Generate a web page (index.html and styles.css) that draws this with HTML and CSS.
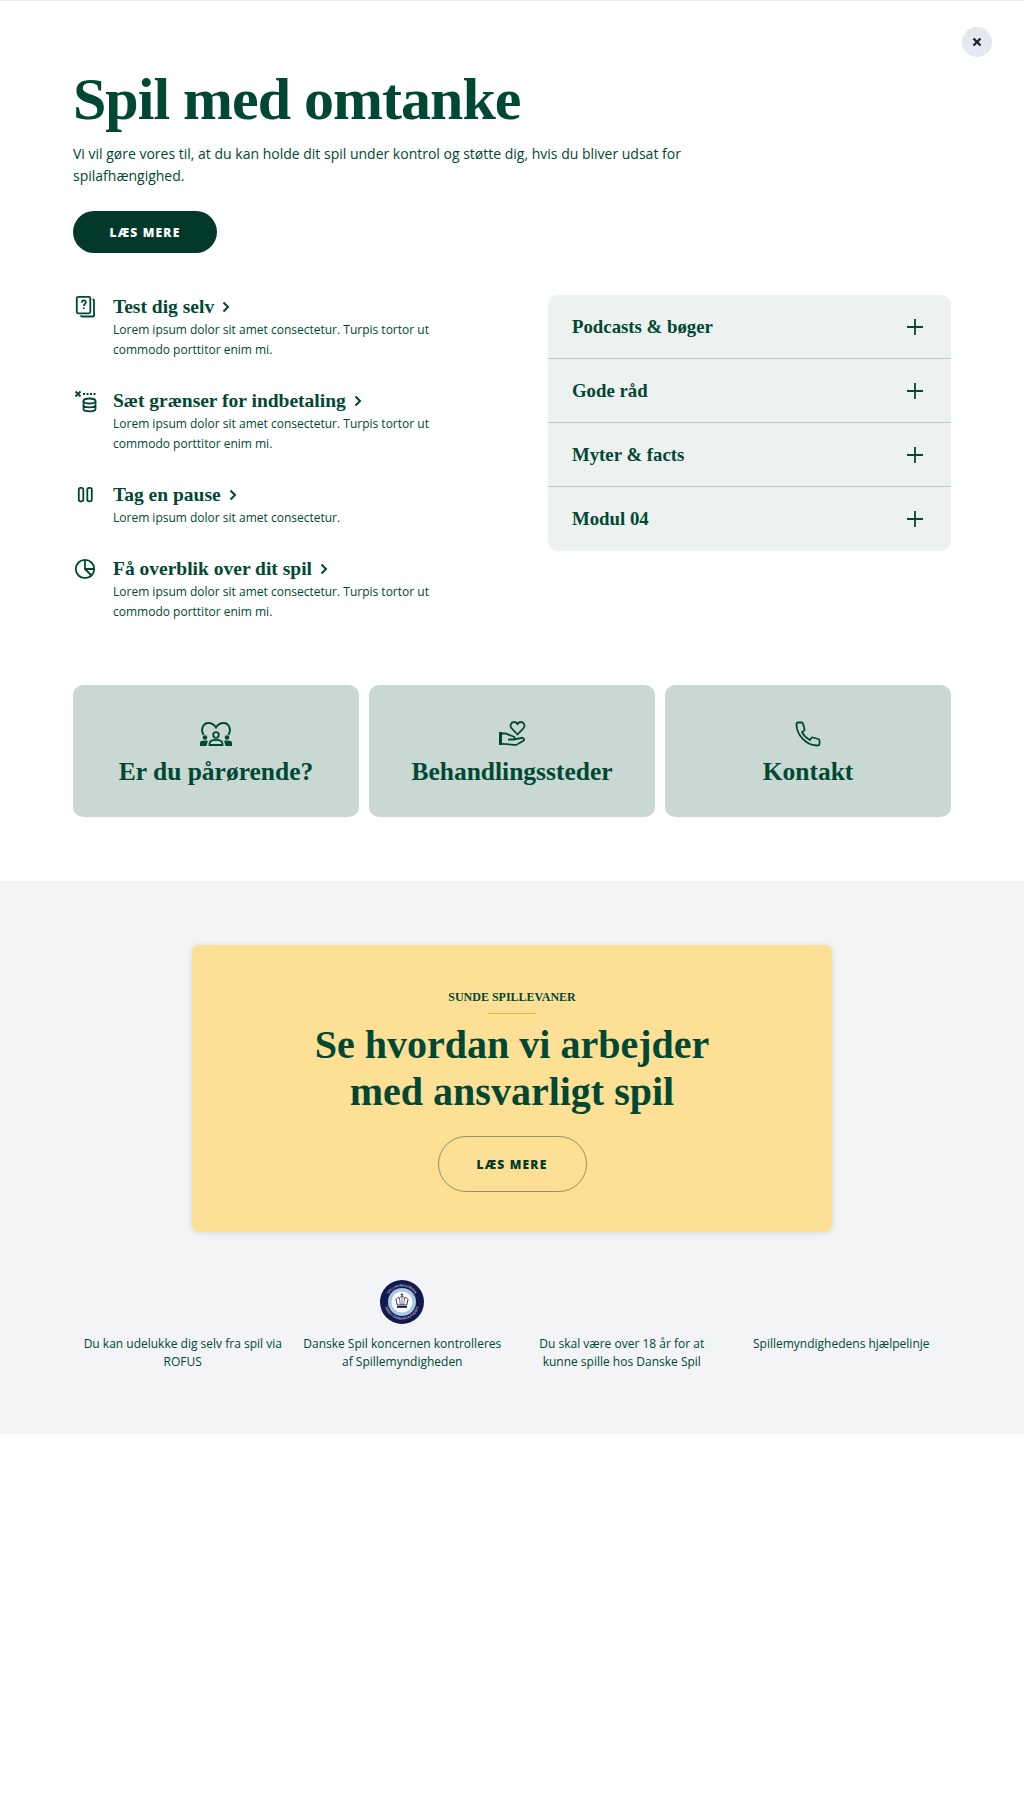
FILE: index.html
```html
<!DOCTYPE html>
<html lang="en">
  <head>
    <meta charset="UTF-8" />
    <meta name="viewport" content="width=device-width, initial-scale=1.0" />
    <title>Spil med omtanke</title>
    <link rel="stylesheet" href="styles.css">
  </head>
  <body>
    <div class="top-section">
      <div class="close-row">
        <button class="close-button" aria-label="Luk">
          <svg width="10" height="10" viewBox="0 0 10 10"><path d="M1.5 1.5l7 7M8.500 1.500l-7 7" /></svg>
        </button>
      </div>

      <h1>Spil med omtanke</h1>
      <p class="intro">Vi vil gøre vores til, at du kan holde dit spil under kontrol og støtte dig, hvis du bliver udsat for spilafhængighed.</p>
      <a class="button-dark" href="#">LÆS MERE</a>

      <div class="columns">
        <div class="link-list">
          <div class="link-item">
            <svg class="link-icon" width="24" height="24" viewBox="0 0 24 24">
              <rect x="3.800" y="1.800" width="13.500" height="16.500" rx="1.500" />
              <path d="M19.500 4.500h.5a1 1 0 0 1 1 1v15a1 1 0 0 1-1 1h-11a1 1 0 0 1-1-1v-.3" />
              <path d="M8.800 7.500c.2-3 4.200-2.700 4 0-.1 1.600-2 1.500-2 3.500M10.800 12.500v1.500" />
            </svg>
            <div>
              <h3>Test dig selv <svg class="chevron" width="8" height="12" viewBox="0 0 8 12"><path d="M1.500 1.500L6 6l-4.500 4.500" /></svg></h3>
              <p>Lorem ipsum dolor sit amet consectetur. Turpis tortor ut commodo porttitor enim mi.</p>
            </div>
          </div>
          <div class="link-item">
            <svg class="link-icon" width="24" height="24" viewBox="0 0 24 24">
              <path d="M2.500 2.500l5 5M7.500 2.500l-5 5" />
              <path d="M10 5h14" class="dashed" />
              <ellipse cx="16.500" cy="12" rx="6" ry="2.500" />
              <path d="M10.500 12v8c0 1.300 2.700 2.300 6 2.300s6-1 6-2.300v-8M10.500 16c0 1.300 2.700 2.300 6 2.300s6-1 6-2.300" />
            </svg>
            <div>
              <h3>Sæt grænser for indbetaling <svg class="chevron" width="8" height="12" viewBox="0 0 8 12"><path d="M1.500 1.500L6 6l-4.500 4.500" /></svg></h3>
              <p>Lorem ipsum dolor sit amet consectetur. Turpis tortor ut commodo porttitor enim mi.</p>
            </div>
          </div>
          <div class="link-item">
            <svg class="link-icon" width="24" height="24" viewBox="0 0 24 24">
              <rect x="5.800" y="4.800" width="4.500" height="13.500" rx="1.800" />
              <rect x="14.300" y="4.800" width="4.500" height="13.500" rx="1.800" />
            </svg>
            <div>
              <h3>Tag en pause <svg class="chevron" width="8" height="12" viewBox="0 0 8 12"><path d="M1.500 1.500L6 6l-4.500 4.500" /></svg></h3>
              <p>Lorem ipsum dolor sit amet consectetur.</p>
            </div>
          </div>
          <div class="link-item">
            <svg class="link-icon" width="24" height="24" viewBox="0 0 24 24">
              <circle cx="12" cy="12" r="9.200" />
              <path d="M12 2.800V12h9.200M12 12l6.500 6.500" />
            </svg>
            <div>
              <h3>Få overblik over dit spil <svg class="chevron" width="8" height="12" viewBox="0 0 8 12"><path d="M1.500 1.500L6 6l-4.500 4.500" /></svg></h3>
              <p>Lorem ipsum dolor sit amet consectetur. Turpis tortor ut commodo porttitor enim mi.</p>
            </div>
          </div>
        </div>

        <div class="accordion">
          <div class="accordion-row"><span>Podcasts &amp; bøger</span><svg width="16" height="16" viewBox="0 0 16 16"><path d="M8 0v16M0 8h16" /></svg></div>
          <div class="accordion-row"><span>Gode råd</span><svg width="16" height="16" viewBox="0 0 16 16"><path d="M8 0v16M0 8h16" /></svg></div>
          <div class="accordion-row"><span>Myter &amp; facts</span><svg width="16" height="16" viewBox="0 0 16 16"><path d="M8 0v16M0 8h16" /></svg></div>
          <div class="accordion-row"><span>Modul 04</span><svg width="16" height="16" viewBox="0 0 16 16"><path d="M8 0v16M0 8h16" /></svg></div>
        </div>
      </div>

      <div class="cards">
        <div class="card">
          <svg class="card-icon" width="32" height="24" viewBox="0 0 32 24">
            <path d="M3.500 13C.5 8 2.500 1 8.500 1c3.500 0 5.800 1.800 7.500 4.500C17.700 2.800 20 1 23.500 1c6 0 8 7 5 12" />
            <circle cx="16" cy="13" r="2.800" />
            <path d="M9.500 23v-1c0-3 2.500-4.200 6.500-4.200s6.500 1.200 6.500 4.200v1z" />
            <circle class="solid" cx="5" cy="15.500" r="2.300" />
            <circle class="solid" cx="27" cy="15.500" r="2.300" />
            <path class="solid" d="M0 24v-3c0-1.800 1.500-2.500 5-2.500 1.200 0 2.100.1 2.800.4L6.500 24zM32 24v-3c0-1.800-1.500-2.500-5-2.500-1.200 0-2.100.1-2.800.4l1.300 5.100z" />
          </svg>
          <h2>Er du pårørende?</h2>
        </div>
        <div class="card">
          <svg class="card-icon" width="28" height="26" viewBox="0 0 28 26">
            <path d="M19.500 13.500l-6-6.300c-2-2.300-.6-6.200 2.500-6.200 1.600 0 2.800.8 3.500 2 .7-1.200 1.900-2 3.500-2 3.100 0 4.500 3.900 2.500 6.200z" />
            <rect class="solid" x="1" y="11" width="3" height="13" />
            <path d="M4 12.500h3.500l8 3c1.800.7 1.200 3.500-1 3H10M15.500 18.500l8-1.500c2.500-.5 3.500 2 1.500 3l-6 3.500c-1 .5-2 .6-3 .3L4 22.800" />
          </svg>
          <h2>Behandlingssteder</h2>
        </div>
        <div class="card">
          <svg class="card-icon" width="26" height="26" viewBox="0 0 26 26">
            <path d="M3 1.500h3.500c.8 0 1.300.5 1.500 1.200L9.500 8c.2.700 0 1.200-.5 1.600L7 11.200c1.700 3.400 4.300 6 7.800 7.800l1.600-2c.4-.5 1-.7 1.600-.5l5.300 1.500c.7.200 1.200.7 1.200 1.500V23c0 .9-.6 1.500-1.500 1.500C11.500 24.500 1.500 14.500 1.500 3c0-.9.600-1.500 1.500-1.500z" />
          </svg>
          <h2>Kontakt</h2>
        </div>
      </div>
    </div>

    <div class="gray-section">
      <div class="promo">
        <div class="promo-label">SUNDE SPILLEVANER</div>
        <div class="promo-rule"></div>
        <h2>Se hvordan vi arbejder<br />med ansvarligt spil</h2>
        <a class="button-outline" href="#">LÆS MERE</a>
      </div>

      <div class="facts">
        <div class="fact">
          <div class="fact-logo"></div>
          <p>Du kan udelukke dig selv fra spil via ROFUS</p>
        </div>
        <div class="fact">
          <div class="fact-logo">
            <svg class="seal" width="44" height="44" viewBox="0 0 44 44">
              <defs>
                <path id="ring-top" d="M6.500 22a15.500 15.500 0 0 1 31 0" />
                <path id="ring-bottom" d="M4.500 22a17.500 17.500 0 0 0 35 0" />
              </defs>
              <circle cx="22" cy="22" r="22" fill="#14194d" />
              <circle cx="22" cy="22" r="14" fill="#a9c6e6" />
              <circle cx="22" cy="22" r="10.500" fill="#fff" />
              <text class="ring-text"><textPath href="#ring-top" startOffset="50%" text-anchor="middle">SPILLEMYNDIGHEDEN</textPath></text>
              <text class="ring-text"><textPath href="#ring-bottom" startOffset="50%" text-anchor="middle">DANISH GAMBLING AUTHORITY</textPath></text>
              <path class="crown" d="M22 13.500v3M20.800 14.500h2.400" />
              <path class="crown" d="M16 19.500c1.500-2.500 3-2 3.500-1 .3-1.500 1.800-2.200 2.500-2.200s2.200.7 2.500 2.200c.5-1 2-1.500 3.500 1l-1.300 5.500H17.300z" />
              <path class="crown-thin" d="M19.500 18.500l.8 6.500M24.500 18.500l-.8 6.500M22 16.500V25" />
              <rect x="17" y="26" width="10" height="1.800" fill="#14194d" />
            </svg>
          </div>
          <p>Danske Spil koncernen kontrolleres af Spillemyndigheden</p>
        </div>
        <div class="fact">
          <div class="fact-logo"></div>
          <p>Du skal være over 18 år for at kunne spille hos Danske Spil</p>
        </div>
        <div class="fact">
          <div class="fact-logo"></div>
          <p>Spillemyndighedens hjælpelinje</p>
        </div>
      </div>
    </div>
  </body>
</html>
```

FILE: styles.css
```css
* {
  box-sizing: border-box;
}
body {
  margin: 0;
  min-height: 1816px;
  background-color: #fff;
  color: #004833;
  font-family: "Open Sans", sans-serif;
}
h1,
h2,
h3,
p {
  margin: 0;
}
a {
  text-decoration: none;
}
svg {
  display: block;
  fill: none;
  stroke: #004833;
  stroke-width: 1.800;
}
.top-section {
  height: 881px;
  padding: 26px 32px 0 73px;
  border-top: 1px solid #e9ebee;
}
.close-row {
  display: flex;
  justify-content: flex-end;
  height: 30px;
}
.close-button {
  display: flex;
  align-items: center;
  justify-content: center;
  width: 30px;
  height: 30px;
  padding: 0;
  border: none;
  border-radius: 50%;
  background-color: #e5e8ef;
}
.close-button svg {
  stroke: #1c2530;
  stroke-width: 2.400;
}
h1 {
  margin-top: 9px;
  height: 66px;
  color: #004833;
  font-family: "Liberation Serif", serif;
  font-size: 60px;
  font-weight: 700;
  line-height: 66px;
  letter-spacing: -1px;
}
.intro {
  width: 620px;
  margin-top: 11px;
  font-size: 14px;
  line-height: 22px;
}
.button-dark {
  display: flex;
  align-items: center;
  justify-content: center;
  width: 144px;
  height: 42px;
  margin-top: 24px;
  border-radius: 21px;
  background-color: #03392a;
  color: #fff;
  font-size: 12px;
  font-weight: 800;
  letter-spacing: 1.200px;
}
.columns {
  display: flex;
  justify-content: space-between;
  width: 878px;
  margin-top: 42px;
}
.link-list {
  display: flex;
  flex-direction: column;
  gap: 29px;
  width: 370px;
}
.link-item {
  display: flex;
}
.link-icon {
  flex: none;
  margin-right: 16px;
}
.link-item h3 {
  display: flex;
  align-items: center;
  gap: 8px;
  color: #004833;
  font-family: "Liberation Serif", serif;
  font-size: 19.500px;
  font-weight: 700;
  line-height: 24px;
}
.chevron {
  stroke-width: 2;
}
.dashed {
  stroke-dasharray: 2 1.500;
}
.link-item p {
  margin-top: 1px;
  font-size: 12px;
  line-height: 20px;
}
.accordion {
  width: 403px;
  height: 256px;
  border-radius: 10px;
  background-color: #edf1f0;
}
.accordion-row {
  display: flex;
  align-items: center;
  justify-content: space-between;
  height: 64px;
  padding: 0 28px 0 24px;
  border-bottom: 1px solid #b9ccc6;
  font-family: "Liberation Serif", serif;
  font-size: 18.800px;
  font-weight: 700;
}
.accordion-row:last-child {
  border-bottom: none;
}
.cards {
  display: grid;
  grid-template-columns: repeat(3, 286px);
  gap: 10px;
  margin-top: 63px;
}
.card {
  display: flex;
  flex-direction: column;
  align-items: center;
  height: 132px;
  padding-top: 36px;
  border-radius: 10px;
  background-color: #cad8d3;
}
.card-icon {
  height: 26px;
}
.card-icon .solid {
  fill: #004833;
  stroke: none;
}
.card h2 {
  margin-top: 9px;
  font-family: "Liberation Serif", serif;
  font-size: 25.500px;
  font-weight: 700;
  line-height: 32px;
}
.gray-section {
  height: 553px;
  padding-top: 64px;
  background-color: #f2f4f6;
}
.promo {
  display: flex;
  flex-direction: column;
  align-items: center;
  width: 640px;
  height: 287px;
  margin: 0 auto;
  padding-top: 44px;
  border-radius: 8px;
  background-color: #fde095;
  box-shadow: 0 1px 6px rgba(0, 0, 0, 0.12);
}
.promo-label {
  font-family: "Liberation Serif", serif;
  font-size: 12px;
  font-weight: 700;
  line-height: 16px;
}
.promo-rule {
  width: 48px;
  height: 1px;
  margin-top: 8px;
  background-color: #f5b82e;
}
.promo h2 {
  margin-top: 7px;
  font-family: "Liberation Serif", serif;
  font-size: 40px;
  font-weight: 700;
  line-height: 47px;
  text-align: center;
}
.button-outline {
  display: flex;
  align-items: center;
  justify-content: center;
  width: 149px;
  height: 56px;
  margin-top: 21px;
  border: 1px solid rgba(3, 57, 42, 0.45);
  border-radius: 28px;
  color: #03392a;
  font-size: 12px;
  font-weight: 800;
  letter-spacing: 1.200px;
}
.facts {
  display: grid;
  grid-template-columns: repeat(4, 219.500px);
  width: 878px;
  margin: 48px auto 0;
}
.fact {
  display: flex;
  flex-direction: column;
  align-items: center;
  padding: 0 9px;
  text-align: center;
}
.fact-logo {
  height: 44px;
}
.fact p {
  margin-top: 11px;
  font-size: 12px;
  line-height: 18px;
}
.seal {
  stroke: none;
}
.crown {
  fill: #fff;
  stroke: #14194d;
  stroke-width: 0.900;
}
.crown-thin {
  stroke: #14194d;
  stroke-width: 0.600;
}
.ring-text {
  fill: #fff;
  font-family: "Open Sans", sans-serif;
  font-size: 3px;
}
```
